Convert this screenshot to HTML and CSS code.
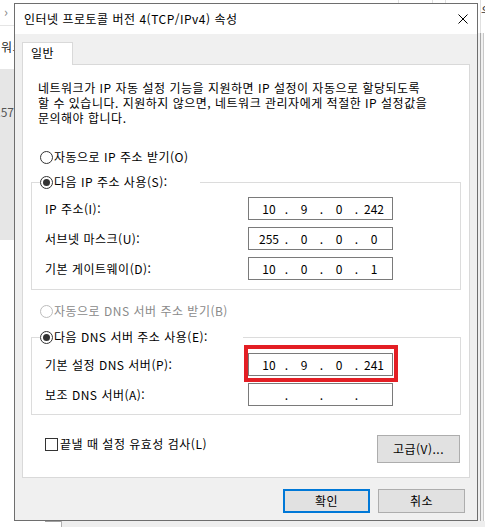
FILE: index.html
```html
<!DOCTYPE html>
<html lang="ko">
<head>
<meta charset="utf-8">
<title>인터넷 프로토콜 버전 4(TCP/IPv4) 속성</title>
<link rel="stylesheet" href="styles.css">
</head>
<body>
<div class="desktop">
  <div class="bg-left">
    <div class="bl-top"><span class="chev">›</span></div>
    <div class="bl-mid">워크</div>
    <div class="bl-gray"><span class="num">157</span></div>
  </div>
  <div class="bg-top">
    <span class="sep s1"></span><span class="sep s2"></span><span class="sep s3"></span>
  </div>
  <div class="bg-right">
    <div class="br-top"><span class="br-char">우</span></div>
    <div class="br-col"><span class="br-a"></span><span class="br-b"></span><span class="br-c"></span><span class="br-d"></span></div>
  </div>
  <div class="bg-bottom-tab"></div>
  <div class="bg-bottom-win"></div>

  <div class="dialog">
    <div class="titlebar">
      <span class="title">인터넷 프로토콜 버전 4(TCP/IPv4) 속성</span>
      <svg class="close" width="10" height="10" viewBox="0 0 10 10"><path d="M0.5 0.5 L9.5 9.5 M9.5 0.5 L0.5 9.5" stroke="#000" stroke-width="1" fill="none"/></svg>
    </div>
    <div class="body">
      <div class="tabs"><div class="tab">일반</div></div>
      <div class="panel">
        <p class="intro">네트워크가 IP 자동 설정 기능을 지원하면 IP 설정이 자동으로 할당되도록<br>할 수 있습니다. 지원하지 않으면, 네트워크 관리자에게 적절한 IP 설정값을<br>문의해야 합니다.</p>

        <div class="radio first"><span class="circle"></span><span>자동으로 IP 주소 받기(O)</span></div>

        <fieldset class="group g-ip">
          <legend class="radio legend-ip"><span class="circle on"></span><span>다음 IP 주소 사용(S):</span></legend>
          <div class="rows">
            <div class="row"><span class="lbl">IP 주소(I):</span>
              <div class="ipbox"><span class="oct">10</span><span class="dotc">.</span><span class="oct">9</span><span class="dotc">.</span><span class="oct">0</span><span class="dotc">.</span><span class="oct">242</span></div>
            </div>
            <div class="row"><span class="lbl">서브넷 마스크(U):</span>
              <div class="ipbox"><span class="oct">255</span><span class="dotc">.</span><span class="oct">0</span><span class="dotc">.</span><span class="oct">0</span><span class="dotc">.</span><span class="oct">0</span></div>
            </div>
            <div class="row"><span class="lbl">기본 게이트웨이(D):</span>
              <div class="ipbox"><span class="oct">10</span><span class="dotc">.</span><span class="oct">0</span><span class="dotc">.</span><span class="oct">0</span><span class="dotc">.</span><span class="oct">1</span></div>
            </div>
          </div>
        </fieldset>

        <div class="radio disabled"><span class="circle"></span><span>자동으로 DNS 서버 주소 받기(B)</span></div>

        <fieldset class="group g-dns">
          <legend class="radio legend-dns"><span class="circle on"></span><span>다음 DNS 서버 주소 사용(E):</span></legend>
          <div class="rows">
            <div class="row"><span class="lbl">기본 설정 DNS 서버(P):</span>
              <div class="ipbox"><span class="oct">10</span><span class="dotc">.</span><span class="oct">9</span><span class="dotc">.</span><span class="oct">0</span><span class="dotc">.</span><span class="oct">241</span><span class="highlight"></span></div>
            </div>
            <div class="row"><span class="lbl">보조 DNS 서버(A):</span>
              <div class="ipbox"><span class="oct"></span><span class="dotc">.</span><span class="oct"></span><span class="dotc">.</span><span class="oct"></span><span class="dotc">.</span><span class="oct"></span></div>
            </div>
          </div>
        </fieldset>

        <div class="bottomrow">
          <div class="check"><span class="box"></span><span>끝낼 때 설정 유효성 검사(L)</span></div>
          <button class="btn adv">고급(V)...</button>
        </div>
      </div>
      <div class="buttons">
        <button class="btn dlg ok">확인</button>
        <button class="btn dlg">취소</button>
      </div>
    </div>
  </div>
</div>
</body>
</html>
```

FILE: styles.css
```css
* { box-sizing: border-box; }
html, body { margin: 0; padding: 0; }
body {
  width: 485px;
  height: 527px;
  overflow: hidden;
  background: #fff;
  font-family: "Noto Sans CJK KR", "Noto Sans", sans-serif;
  font-size: 12px;
  letter-spacing: 0.5px;
  color: #000;
}
.desktop { position: relative; width: 485px; height: 527px; }

/* background windows */
.bg-left {
  position: absolute; left: 0; top: 0; width: 14px; height: 527px;
  overflow: hidden; display: flex; flex-direction: column;
}
.bl-top { height: 26px; border-bottom: 1px solid #e5e5e5; line-height: 24px; padding-left: 4px; color: #888; font-size: 13px; }
.bl-mid { height: 43px; line-height: 42px; padding-left: 1px; white-space: nowrap; color: #222; }
.bl-gray { height: 171px; background: #e6e6e6; display: flex; justify-content: flex-end; padding-top: 35px; }
.bl-gray .num { line-height: 16px; height: 16px; color: #555; white-space: nowrap; letter-spacing: 0; }

.bg-top { position: absolute; left: 0; top: 0; width: 485px; height: 3px; }
.bg-top .sep { position: absolute; top: 0; width: 1px; height: 3px; background: #e0e0e0; }
.bg-top .s1 { left: 398px; }
.bg-top .s2 { left: 432px; }
.bg-top .s3 { left: 445px; }

.bg-right { position: absolute; left: 478px; top: 0; width: 7px; height: 527px; display: flex; flex-direction: column; overflow: hidden; }
.br-top { height: 33px; border-left: 1px solid #e0e0e0; margin-left: 2px; position: relative; }
.br-char { position: absolute; left: 0; top: 4px; font-size: 12px; line-height: 14px; color: #333; }
.br-col { flex: 1; display: flex; }
.br-a { width: 2px; background: #f0f0f0; }
.br-b { width: 1px; background: #a8a8a8; }
.br-c { width: 2px; background: #f0f0f0; }
.br-d { width: 1px; background: #c8c8c8; }

.bg-bottom-tab { position: absolute; left: 45px; top: 521px; width: 17px; height: 1px; background: #a0a0a0; }
.bg-bottom-win { position: absolute; left: 61px; top: 521px; right: 0; bottom: 0; background: #eeeeee; border-left: 1px solid #b0b0b0; }

/* dialog window */
.dialog {
  position: absolute; left: 14px; top: 3px; width: 464px; height: 518px;
  border: 1px solid #6e6e6e; background: #f0f0f0;
  display: flex; flex-direction: column;
}
.titlebar {
  height: 30px; background: #fff; display: flex; align-items: center;
  padding-left: 9px; padding-right: 9px; flex: none;
}
.title { line-height: 16px; white-space: nowrap; }
.close { margin-left: auto; margin-top: -1px; }

.body { flex: 1; padding: 8px 7px 0 7px; }
.tabs { display: flex; height: 22px; }
.tab {
  width: 51px; height: 23px; background: #fff;
  border: 1px solid #d9d9d9; border-bottom: none;
  padding-left: 8px; line-height: 20px;
  position: relative; z-index: 1;
}
.panel {
  height: 414px; background: #fff; border: 1px solid #d9d9d9;
  display: flex; flex-direction: column;
}
.intro { margin: 15px 0 0 15px; line-height: 15px; white-space: nowrap; }

.radio { display: flex; align-items: center; height: 16px; gap: 1px; white-space: nowrap; line-height: 16px; }
.radio.first { margin: 24px 0 0 17px; }
.radio.disabled { margin: 13px 0 0 17px; color: #8a8a8a; }
.circle {
  width: 13px; height: 13px; border-radius: 50%; border: 1px solid #333;
  background: #fff; display: flex; align-items: center; justify-content: center; flex: none;
}
.circle.on::after { content: ""; width: 7px; height: 7px; border-radius: 50%; background: #333; }
.disabled .circle { border-color: #bcbcbc; }

.group { margin: 0 8px; padding: 0; border: 1px solid #dcdcdc; min-width: 0; }
.g-ip { margin-top: 9px; }
.g-dns { margin-top: 10px; }
.group legend { padding: 0; margin-left: 8px; }
.legend-ip { width: 160px; }
.legend-dns { width: 203px; }

.rows { display: flex; flex-direction: column; gap: 7px; padding-left: 13px; padding-right: 67px; }
.g-ip .rows { padding-top: 7px; padding-bottom: 9px; }
.g-dns .rows { padding-top: 8px; padding-bottom: 8px; }
.row { display: flex; align-items: center; justify-content: space-between; height: 23px; }
.lbl { white-space: nowrap; line-height: 16px; }

.ipbox {
  position: relative; width: 145px; height: 23px; border: 1px solid #7a7a7a; background: #fff;
  display: flex; align-items: center; padding-left: 5px; line-height: 16px; letter-spacing: 0;
}
.oct { width: 30px; text-align: center; }
.dotc { width: 5px; text-align: center; }
.highlight {
  position: absolute; left: -5px; top: -9px; width: 154px; height: 37px;
  border: 4px solid #e31e24;
}

.bottomrow { display: flex; justify-content: space-between; align-items: flex-start; margin: 20px 9px 0 22px; }
.check { display: flex; align-items: center; gap: 2px; height: 16px; margin-top: 1px; white-space: nowrap; line-height: 16px; }
.box { width: 13px; height: 13px; border: 1px solid #333; background: #fff; flex: none; }

.btn {
  font-family: inherit; font-size: 12px; letter-spacing: 0.5px; color: #000; background: #e1e1e1;
  border: 1px solid #adadad; padding: 0; margin: 0; line-height: 16px;
}
.adv { width: 83px; height: 28px; }
.buttons { display: flex; justify-content: flex-end; gap: 8px; margin-top: 11px; padding-right: 5px; }
.dlg { width: 87px; height: 24px; }
.ok { border: 2px solid #0078d7; }
```
